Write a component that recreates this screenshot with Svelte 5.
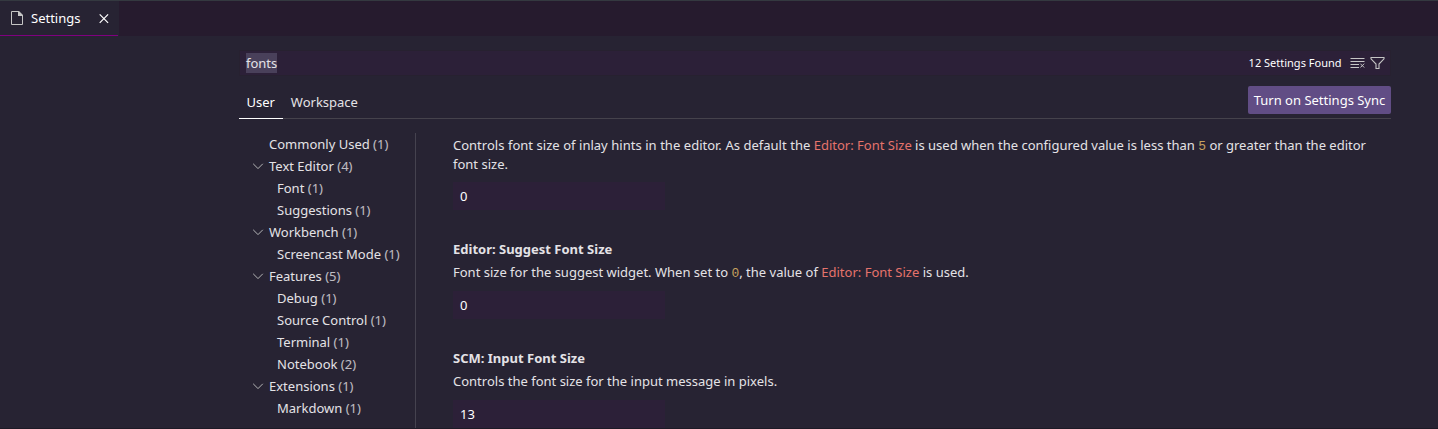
<script>
  const tree = [
    { name: 'Commonly Used', count: 1, level: 0 },
    { name: 'Text Editor', count: 4, level: 0, open: true },
    { name: 'Font', count: 1, level: 1 },
    { name: 'Suggestions', count: 1, level: 1 },
    { name: 'Workbench', count: 1, level: 0, open: true },
    { name: 'Screencast Mode', count: 1, level: 1 },
    { name: 'Features', count: 5, level: 0, open: true },
    { name: 'Debug', count: 1, level: 1 },
    { name: 'Source Control', count: 1, level: 1 },
    { name: 'Terminal', count: 1, level: 1 },
    { name: 'Notebook', count: 2, level: 1 },
    { name: 'Extensions', count: 1, level: 0, open: true },
    { name: 'Markdown', count: 1, level: 1 }
  ];
</script>

<div class="window">
  <header class="tabs">
    <div class="tab">
      <svg class="file" width="16" height="16" viewBox="0 0 16 16">
        <path fill="none" stroke="#c5c5c5" d="M2.5 1.5h7l4 4v9h-11z" />
        <path fill="#c5c5c5" d="M9 1h1l4 4v1H9z" />
      </svg>
      <span>Settings</span>
      <svg class="close" width="16" height="16" viewBox="0 0 16 16">
        <path fill="none" stroke="#fff" stroke-width="1.2" d="M3.7 4.4l8.4 8.4M12.1 4.4l-8.4 8.4" />
      </svg>
    </div>
  </header>

  <main>
    <div class="search">
      <span class="query">fonts</span>
      <span class="found">12 Settings Found</span>
      <svg class="clear" width="16" height="16" viewBox="0 0 16 16">
        <path fill="none" stroke="#c5c5c5" d="M.5 3.5h14M.5 6.5h14M.5 9.5h8.5M.5 12.5h8.5M10.4 8.7l3.8 3.8M14.2 8.7l-3.8 3.8" />
      </svg>
      <svg class="filter" width="16" height="16" viewBox="0 0 16 16">
        <path fill="none" stroke="#c5c5c5" stroke-width="1.1" d="M1 2.5h13v1.3l-5 5.2v4.5H6V9L1 3.8z" />
      </svg>
    </div>

    <div class="scopes">
      <span class="scope active">User</span>
      <span class="scope">Workspace</span>
      <button>Turn on Settings Sync</button>
    </div>

    <div class="body">
      <nav>
        {#each tree as item}
          <div class="row" class:child={item.level === 1}>
            <span class="twist">
              {#if item.open}
                <svg width="16" height="16" viewBox="0 0 16 16">
                  <path fill="none" stroke="#c5c5c5" stroke-width=".9" d="M3.2 5.8L8 10.6l4.8-4.8" />
                </svg>
              {/if}
            </span>
            <span>{item.name} <span class="count">({item.count})</span></span>
          </div>
        {/each}
      </nav>

      <section>
        <article>
          <p><span class="lead">Controls font size of inlay hints in the editor. As default the</span> <a>Editor: Font Size</a> is used when the configured value is less than <code>5</code> or greater than the editor font size.</p>
          <div class="input first">0</div>
        </article>
        <article>
          <h2>Editor: Suggest Font Size</h2>
          <p>Font size for the suggest widget. When set to <code>0</code>, the value of <a>Editor: Font Size</a> is used.</p>
          <div class="input">0</div>
        </article>
        <article>
          <h2>SCM: Input Font Size</h2>
          <p>Controls the font size for the input message in pixels.</p>
          <div class="input">13</div>
        </article>
      </section>
    </div>
  </main>
</div>

<style>
  :global(body) { background: #272333; overflow: hidden; }
  .window {
    box-sizing: border-box;
    height: 429px;
    overflow: hidden;
    display: flex;
    flex-direction: column;
    background: #272333;
    border-top: 1px solid #343940;
    border-bottom: 1px solid #1d1a26;
    color: #e4e2e6;
    font: 13px/18px "Noto Sans", sans-serif;
  }
  svg { display: block; flex: none; }
  .tabs { height: 35px; flex: none; background: #261b2e; display: flex; }
  .tab {
    box-sizing: border-box;
    width: 118px;
    padding-left: 9px;
    display: flex;
    align-items: center;
    background: #272333;
    border-bottom: 1px solid #80007f;
    box-shadow: 1px 0 #272333;
    color: #fff;
  }
  .file { margin-right: 6px; }
  .close { margin-left: auto; margin-right: 6px; }
  main { width: 1152px; margin: 14px 0 0 239px; display: flex; flex-direction: column; flex: 1; min-height: 0; }
  .search {
    box-sizing: border-box;
    height: 26px;
    flex: none;
    display: flex;
    align-items: center;
    padding: 0 4px 0 6px;
    background: #2c2038;
    border: 1px solid #272130;
  }
  .query { background: #49405a; height: 20px; line-height: 20px; }
  .found { margin-left: auto; font-size: 11px; color: #fff; margin-right: 8.5px; }
  .clear { margin-right: 4px; }
  .scopes {
    box-sizing: border-box;
    height: 43px;
    flex: none;
    display: flex;
    align-items: flex-end;
    border-bottom: 1px solid #45424c;
  }
  .scope { padding: 0 8.4px 7px 7.5px; margin-bottom: -1px; border-bottom: 1px solid transparent; }
  .active { color: #fff; border-color: #fff; }
  button {
    margin: 0 0 4px auto;
    height: 28px;
    width: 143px;
    padding: 0;
    border: 0;
    border-radius: 2px;
    background: #614d85;
    color: #fff;
    font: inherit;
  }
  .body { display: flex; flex: 1; min-height: 0; padding-top: 14px; }
  nav { box-sizing: border-box; width: 177px; flex: none; border-right: 1px solid #45424f; }
  .row { display: flex; align-items: center; height: 22px; white-space: nowrap; }
  .child { padding-left: 8px; }
  .twist { width: 16px; margin: 0 3px 0 11px; }
  .count { opacity: .8; }
  section { padding: 3px 0 0 37px; flex: 1; min-width: 0; }
  article { margin-bottom: 30px; }
  h2 { margin: 0 0 5px; font-size: 13px; line-height: 18px; font-weight: 700; }
  p { margin: 0; line-height: 19px; width: 925px; }
  .lead { word-spacing: .19px; }
  a { color: #e5736c; }
  code { font: 13px/1 "Liberation Mono", monospace; color: #c5a15f; }
  .input {
    box-sizing: border-box;
    width: 212px;
    height: 28px;
    margin-top: 9px;
    padding: 0 7px;
    line-height: 28px;
    background: #2c2038;
    color: #fff;
  }
  .first { margin-top: 8px; }
</style>
